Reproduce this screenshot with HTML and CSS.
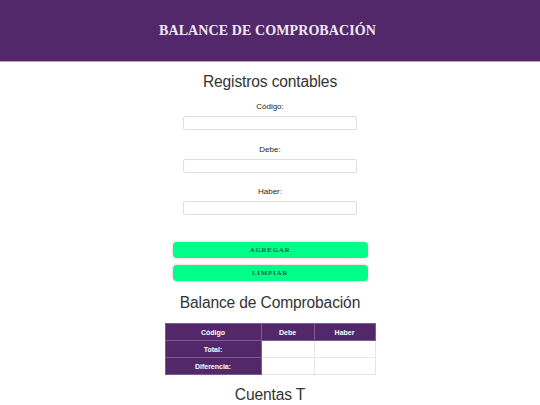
FILE: index.html
```html
<!DOCTYPE html>
<html lang="es">
<head>
<meta charset="utf-8">
<title>Balance de Comprobación</title>
<link rel="stylesheet" href="styles.css">
</head>
<body>
<header class="topbar">
  <h1 class="topbar-title">BALANCE DE COMPROBACIÓN</h1>
</header>
<main class="page">
  <h2 class="section-title first">Registros contables</h2>
  <form class="entry-form">
    <div class="field">
      <label class="field-label" for="codigo">Código:</label>
      <input class="field-input" id="codigo" type="text">
    </div>
    <div class="field">
      <label class="field-label" for="debe">Debe:</label>
      <input class="field-input" id="debe" type="text">
    </div>
    <div class="field">
      <label class="field-label" for="haber">Haber:</label>
      <input class="field-input" id="haber" type="text">
    </div>
    <div class="actions">
      <button class="btn" type="button">AGREGAR</button>
      <button class="btn" type="button">LIMPIAR</button>
    </div>
  </form>
  <h2 class="section-title middle">Balance de Comprobación</h2>
  <table class="balance">
    <thead>
      <tr><th class="c1">Código</th><th class="c2">Debe</th><th class="c3">Haber</th></tr>
    </thead>
    <tbody>
      <tr><th class="rowhead">Total:</th><td></td><td></td></tr>
      <tr><th class="rowhead">Diferencia:</th><td></td><td></td></tr>
    </tbody>
  </table>
  <h2 class="section-title last">Cuentas T</h2>
</main>
</body>
</html>
```
FILE: styles.css
```css
* { box-sizing: border-box; }
html, body { margin: 0; padding: 0; background: #ffffff; }
body { font-family: "Liberation Sans", Arial, sans-serif; color: #333333; }

.topbar {
  height: 62px;
  background: #52286a;
  border-bottom: 1px solid #b89ccb;
  display: flex;
  align-items: center;
  justify-content: center;
}
.topbar-title {
  margin: 0;
  padding-top: 1px;
  padding-right: 5px;
  font-family: "Liberation Serif", "Times New Roman", serif;
  font-weight: bold;
  font-size: 14px;
  letter-spacing: 0.1px;
  color: #efe9f3;
}

.page {
  display: flex;
  flex-direction: column;
  align-items: center;
}

.section-title {
  margin: 0;
  font-weight: normal;
  font-size: 15.6px;
  letter-spacing: -0.15px;
  line-height: 18px;
  color: #333333;
}
.section-title.first { margin-top: 11px; }
.section-title.middle { margin-top: 13px; }
.section-title.last { margin-top: 11px; }

.entry-form {
  display: flex;
  flex-direction: column;
  align-items: center;
  margin-top: 11px;
}
.field {
  display: flex;
  flex-direction: column;
  align-items: center;
  gap: 4px;
  margin-bottom: 14.5px;
}
.field-label {
  font-size: 8px;
  line-height: 10px;
  color: #1e1e1e;
}
.field-input {
  width: 174px;
  height: 14px;
  border: 1px solid #dedede;
  border-radius: 2px;
  background: #ffffff;
  padding: 0;
  margin: 0;
}

.actions {
  display: flex;
  flex-direction: column;
  gap: 7px;
  margin-top: 12.5px;
}
.btn {
  width: 195px;
  height: 16px;
  background: #00ff88;
  border: none;
  border-radius: 4px;
  box-shadow: 0 0 2px 1px rgba(240, 180, 210, 0.55);
  font-family: "Liberation Serif", "Times New Roman", serif;
  font-weight: bold;
  font-size: 7px;
  letter-spacing: 0.7px;
  color: #1c5f3e;
  padding: 0;
  margin: 0;
}

.balance {
  border-collapse: collapse;
  margin-top: 11px;
  font-size: 7px;
}
.balance th, .balance td {
  height: 17px;
  padding: 0;
  text-align: center;
}
.balance thead th {
  background: #52286a;
  color: #ffffff;
  font-weight: bold;
  border: 1px solid #7c5b93;
}
.balance .c1 { width: 96px; }
.balance .c2 { width: 53px; }
.balance .c3 { width: 61px; }
.balance .rowhead {
  background: #52286a;
  color: #ffffff;
  font-weight: bold;
  border: 1px solid #7c5b93;
}
.balance td {
  border: 1px solid #e6e6e6;
  background: #ffffff;
}
```
